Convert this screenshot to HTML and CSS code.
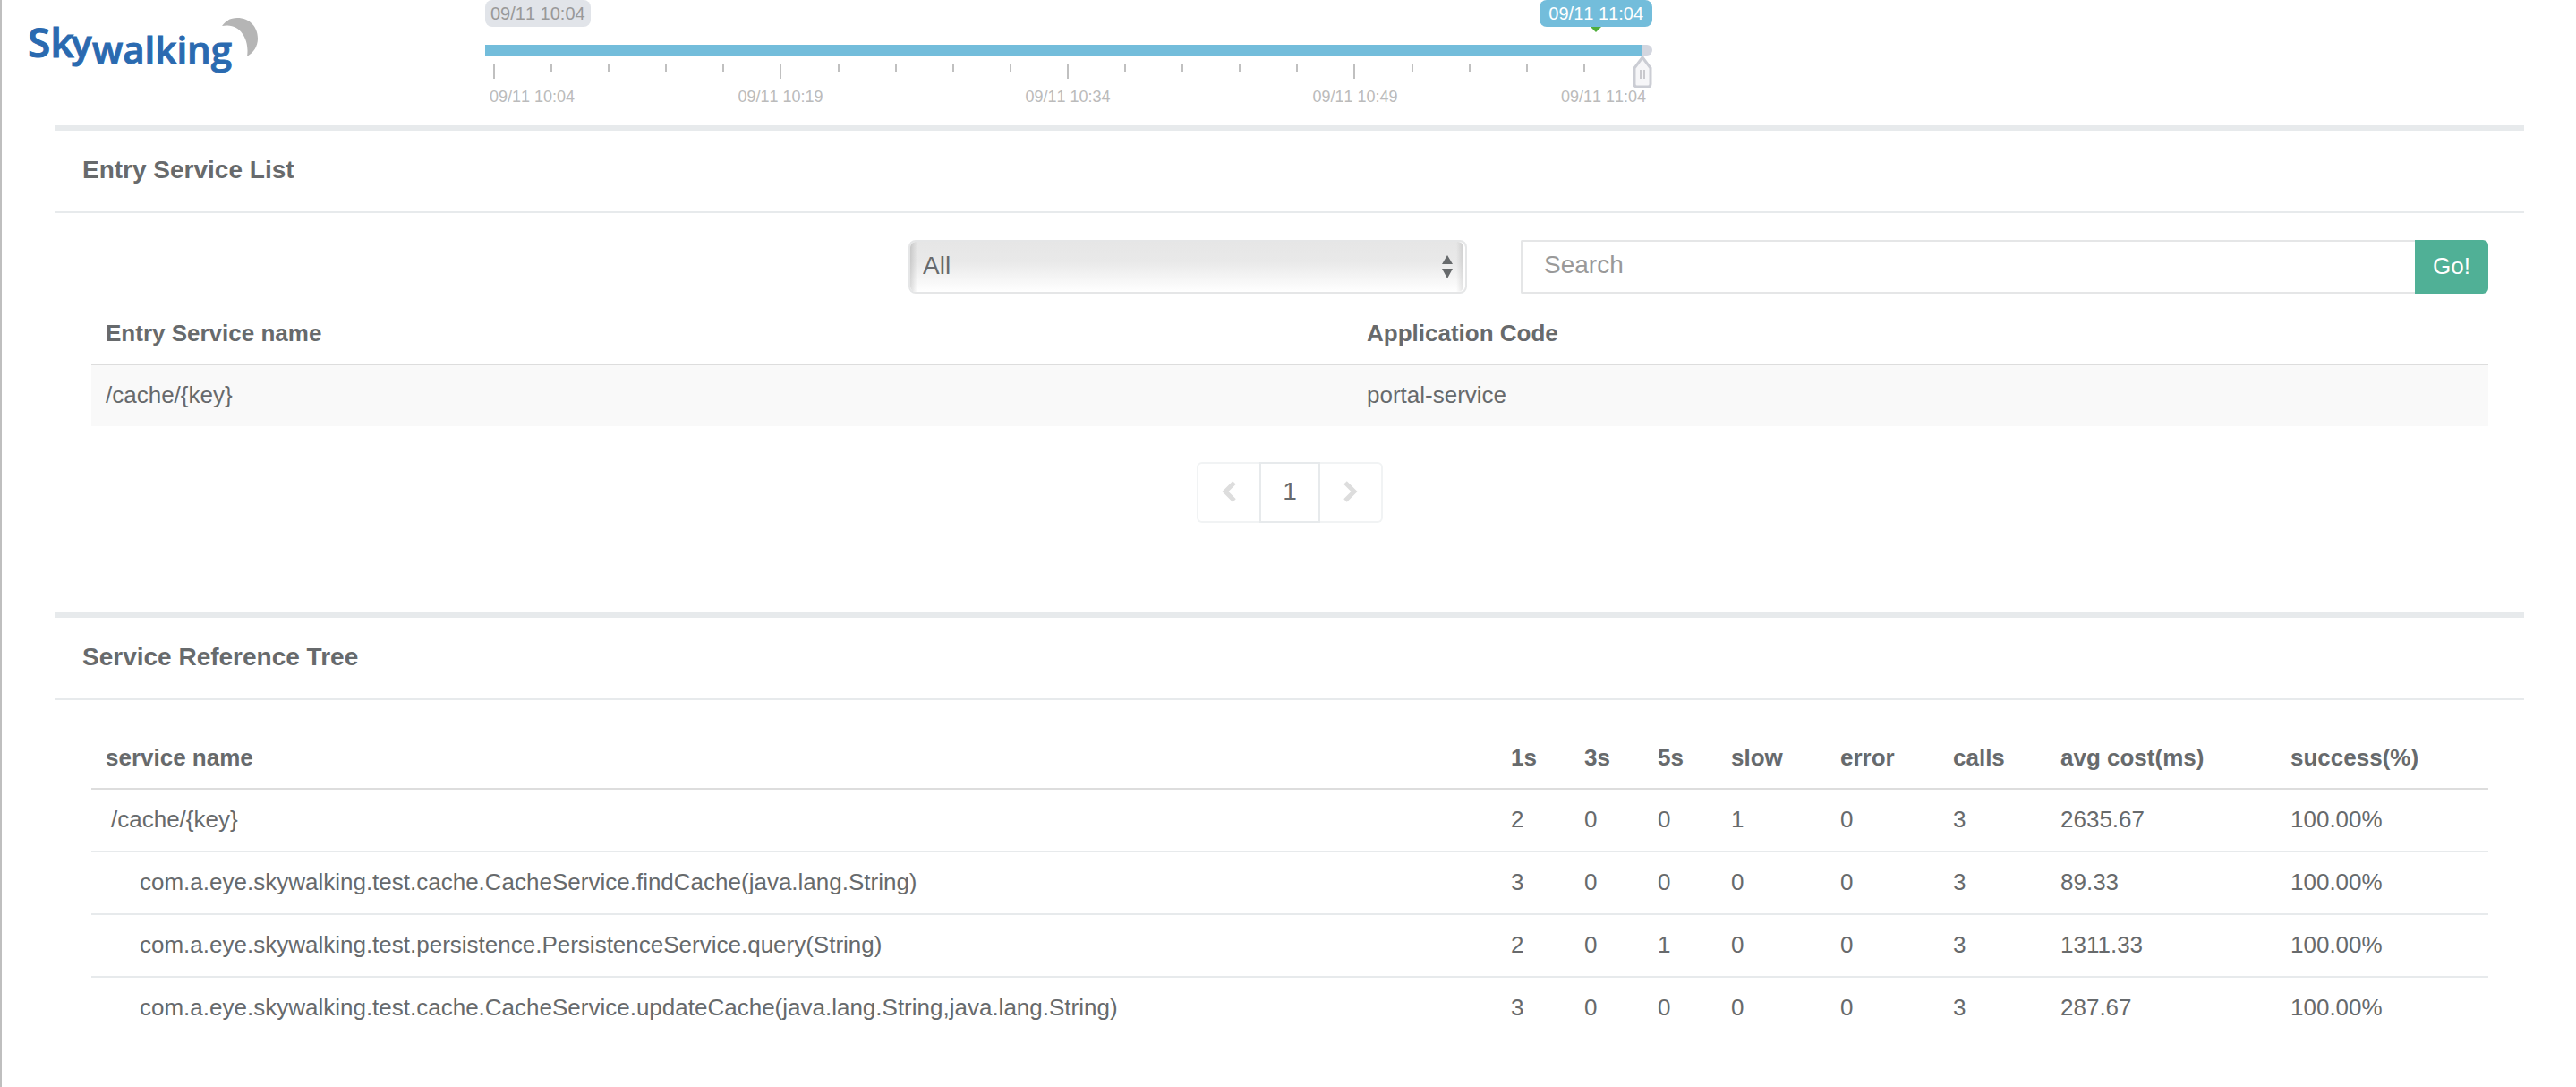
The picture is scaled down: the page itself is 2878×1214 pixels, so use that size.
FILE: index.html
```html
<!DOCTYPE html>
<html lang="en">
<head>
<meta charset="utf-8">
<title>Skywalking</title>
<link rel="stylesheet" href="styles.css">
</head>
<body>
<header class="topbar">
  <a class="logo" href="#" aria-label="Skywalking">
    <svg viewBox="0 0 260 64" width="260" height="64">
      <g fill="#2a6ab0" stroke="#2a6ab0" font-family="Open Sans, Noto Sans, sans-serif" font-weight="600">
        <text x="1" y="46" font-size="46">Sk</text>
        <text x="50" y="46" font-size="42">y</text>
        <text x="73" y="53" font-size="42">walking</text>
      </g>
      <path d="M218 11C223 4 229 2 235 2C249 2 258 12 258 25C258 34 253 41 246 45C249 27 239 7 218 11Z" fill="#b5b5b5"/>
    </svg>
  </a>
  <div class="timeline">
    <div class="badges">
      <span class="badge badge-from">09/11 10:04</span>
      <span class="badge badge-to">09/11 11:04</span>
    </div>
    <div class="track"><div class="range"></div></div>
    <div class="ticks">
      <i class="major"></i><i></i><i></i><i></i><i></i><i class="major"></i><i></i><i></i><i></i><i></i><i class="major"></i><i></i><i></i><i></i><i></i><i class="major"></i><i></i><i></i><i></i><i></i><i class="major"></i>
    </div>
    <div class="labels">
      <span>09/11 10:04</span><span>09/11 10:19</span><span>09/11 10:34</span><span>09/11 10:49</span><span>09/11 11:04</span>
    </div>
    <svg class="handle" viewBox="0 0 22 36" width="22" height="36">
      <path d="M11 2L20 14V32Q20 35 17 35H5Q2 35 2 32V14Z" fill="#f6f6f8" stroke="#cbcdd4" stroke-width="3"/>
      <path d="M8 16h2v10h-2zM12 16h2v10h-2z" fill="#c9c9cd"/>
    </svg>
  </div>
</header>
<main class="content">
  <section class="panel panel-entry">
    <h2 class="panel-title">Entry Service List</h2>
    <div class="panel-body">
      <form class="filters">
        <div class="select-wrap">
          <select class="app-select" aria-label="Application"><option>All</option></select>
          <svg class="arrows" viewBox="0 0 12 26" width="12" height="26"><path d="M0 10L6 0L12 10ZM0 15H12L6 26Z" fill="#676a6c"/></svg>
        </div>
        <div class="search">
          <input class="search-input" type="text" placeholder="Search" aria-label="Search">
          <button class="go" type="button">Go!</button>
        </div>
      </form>
      <table class="table entry-table">
        <colgroup><col class="c-entry"><col></colgroup>
        <thead><tr><th>Entry Service name</th><th>Application Code</th></tr></thead>
        <tbody><tr><td>/cache/{key}</td><td>portal-service</td></tr></tbody>
      </table>
      <nav class="pager" aria-label="Pages">
        <button class="page prev" type="button" aria-label="Previous"><svg viewBox="0 0 16 26" width="16" height="26"><path d="M14 3L4 13L14 23" fill="none" stroke="#ddd" stroke-width="5"/></svg></button>
        <button class="page current" type="button">1</button>
        <button class="page next" type="button" aria-label="Next"><svg viewBox="0 0 16 26" width="16" height="26"><path d="M2 3L12 13L2 23" fill="none" stroke="#ddd" stroke-width="5"/></svg></button>
      </nav>
    </div>
  </section>
  <section class="panel">
    <h2 class="panel-title">Service Reference Tree</h2>
    <div class="panel-body">
      <table class="table">
        <colgroup><col><col class="c-s"><col class="c-s"><col class="c-s"><col class="c-slow"><col class="c-error"><col class="c-calls"><col class="c-cost"><col class="c-rate"></colgroup>
        <thead><tr><th>service name</th><th>1s</th><th>3s</th><th>5s</th><th>slow</th><th>error</th><th>calls</th><th>avg cost(ms)</th><th>success(%)</th></tr></thead>
        <tbody>
          <tr><td class="root">/cache/{key}</td><td>2</td><td>0</td><td>0</td><td>1</td><td>0</td><td>3</td><td>2635.67</td><td>100.00%</td></tr>
          <tr><td class="child">com.a.eye.skywalking.test.cache.CacheService.findCache(java.lang.String)</td><td>3</td><td>0</td><td>0</td><td>0</td><td>0</td><td>3</td><td>89.33</td><td>100.00%</td></tr>
          <tr><td class="child">com.a.eye.skywalking.test.persistence.PersistenceService.query(String)</td><td>2</td><td>0</td><td>1</td><td>0</td><td>0</td><td>3</td><td>1311.33</td><td>100.00%</td></tr>
          <tr><td class="child">com.a.eye.skywalking.test.cache.CacheService.updateCache(java.lang.String,java.lang.String)</td><td>3</td><td>0</td><td>0</td><td>0</td><td>0</td><td>3</td><td>287.67</td><td>100.00%</td></tr>
        </tbody>
      </table>
    </div>
  </section>
</main>
</body>
</html>
```
FILE: styles.css
```css
* {
  box-sizing: border-box;
}

body {
  margin: 0;
  min-height: 100vh;
  border-left: 2px solid #bfbfbf;
  background: #fff;
  color: #676a6c;
  font: 26px/36px "Liberation Sans", Arial, sans-serif;
}

/* Logo and time slider */
.topbar {
  display: grid;
  grid-template-columns: 540px minmax(0, 1304px);
  height: 140px;
}

.logo {
  padding: 18px 0 0 28px;
}

.logo svg {
  display: block;
  overflow: visible;
}

.timeline {
  position: relative;
  font-kerning: none;
}

.badges {
  display: flex;
  justify-content: space-between;
  height: 50px;
}

.badge {
  position: relative;
  height: 30px;
  padding: 0 6px;
  border-radius: 8px;
  background: #e1e4e9;
  color: #999;
  font-size: 20px;
  line-height: 30px;
}

.badge-to {
  padding: 0 10px;
  background: #73bddb;
  color: #fff;
}

.badge-to::after {
  content: "";
  position: absolute;
  top: 100%;
  left: 50%;
  margin-left: -6px;
  border: 6px solid transparent;
  border-top-color: #4fae3b;
  border-bottom: 0;
}

.track {
  height: 12px;
  padding-right: 11px;
  border-radius: 0 8px 8px 0;
  background: #d3d6df;
}

.range {
  height: 12px;
  background: #73bddb;
}

.ticks {
  display: flex;
  justify-content: space-between;
  height: 26px;
  padding: 10px 11px 0 9px;
}

.ticks i {
  width: 2px;
  height: 8px;
  background: #c0c0c0;
}

.ticks .major {
  height: 16px;
}

.labels {
  display: grid;
  grid-template-columns: 1fr 2fr 2fr 2fr 1fr;
  padding: 10px 11px 0 9px;
  color: #bbb;
  font-size: 18px;
  line-height: 20px;
  text-align: center;
}

.labels span:first-child {
  margin-left: -4px;
  text-align: left;
}

.labels span:last-child {
  margin-right: -4px;
  text-align: right;
}

.handle {
  position: absolute;
  top: 62px;
  right: 0;
}

/* Panels */
.content {
  padding: 0 58px 0 60px;
}

.panel-entry {
  height: 544px;
}

.panel-title {
  margin: 0;
  padding: 29px 30px 31px;
  border-top: 6px solid #e7eaec;
  border-bottom: 2px solid #e7eaec;
  font-size: 28px;
  line-height: 30px;
}

.panel-body {
  padding: 30px 40px;
}

.filters {
  display: grid;
  grid-template-columns: 624px 1081px;
  justify-content: end;
  gap: 60px;
}

.select-wrap {
  position: relative;
}

.app-select {
  display: block;
  width: 100%;
  height: 60px;
  padding: 0 14px 2px;
  border: 2px solid #e5e6e7;
  border-radius: 8px;
  appearance: none;
  background: linear-gradient(90deg, #0002, #0000 8px calc(100% - 10px), #0002), linear-gradient(#e6e6e6, #e9e9e9 40%, #fff);
  background-clip: padding-box;
  box-shadow: inset -2px 0 0 #fff;
  color: inherit;
  font: inherit;
  font-size: 28px;
}

.arrows {
  position: absolute;
  top: 17px;
  right: 16px;
}

.search {
  display: flex;
}

.search-input {
  flex: 1;
  min-width: 0;
  height: 60px;
  padding: 0 24px 4px;
  border: 2px solid #e5e6e7;
  border-right: 0;
  border-radius: 2px 0 0 2px;
  font: inherit;
  font-size: 28px;
}

.search-input::placeholder {
  color: #999;
}

.go {
  width: 82px;
  padding: 0 0 2px;
  border: 0;
  border-radius: 0 6px 6px 0;
  background: #50b096;
  color: #fff;
  font: inherit;
}

/* Tables */
.table {
  width: 100%;
  border-collapse: separate;
  border-spacing: 0;
  table-layout: fixed;
}

.table th,
.table td {
  height: 70px;
  padding: 15px 16px 17px;
  border-top: 2px solid #e7eaec;
  text-align: left;
  white-space: nowrap;
}

.table th {
  padding: 16px;
  border-top: 0;
  border-bottom: 2px solid #ddd;
}

.table tbody tr:first-child td {
  height: 68px;
  border-top: 0;
}

.entry-table {
  margin-top: 10px;
}

.entry-table td {
  background: #f9f9f9;
}

.c-entry {
  width: 1409px;
}

.c-s {
  width: 82px;
}

.c-slow {
  width: 122px;
}

.c-error {
  width: 126px;
}

.c-calls {
  width: 120px;
}

.c-cost {
  width: 257px;
}

.c-rate {
  width: 237px;
}

.table .root {
  padding-left: 22px;
}

.table .child {
  padding-left: 54px;
}

/* Pagination */
.pager {
  display: flex;
  justify-content: center;
  margin-top: 40px;
}

.page {
  display: flex;
  align-items: center;
  justify-content: center;
  width: 70px;
  height: 68px;
  padding: 0 0 2px;
  border: 2px solid #f1f3f4;
  background: #fff;
  color: inherit;
  font: inherit;
  font-size: 28px;
}

.prev {
  border-right: 0;
  border-radius: 6px 0 0 6px;
}

.current {
  width: 68px;
  border-color: #e7eaec;
}

.next {
  border-left: 0;
  border-radius: 0 6px 6px 0;
}
```
